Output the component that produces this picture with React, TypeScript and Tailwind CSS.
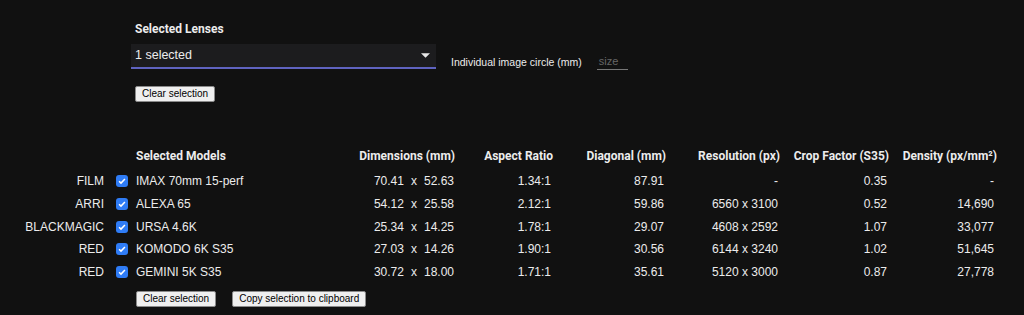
const rows = [
  { brand: "FILM", model: "IMAX 70mm 15-perf", w: "70.41", h: "52.63", ar: "1.34:1", diag: "87.91", res: "-", crop: "0.35", dens: "-" },
  { brand: "ARRI", model: "ALEXA 65", w: "54.12", h: "25.58", ar: "2.12:1", diag: "59.86", res: "6560 x 3100", crop: "0.52", dens: "14,690" },
  { brand: "BLACKMAGIC", model: "URSA 4.6K", w: "25.34", h: "14.25", ar: "1.78:1", diag: "29.07", res: "4608 x 2592", crop: "1.07", dens: "33,077" },
  { brand: "RED", model: "KOMODO 6K S35", w: "27.03", h: "14.26", ar: "1.90:1", diag: "30.56", res: "6144 x 3240", crop: "1.02", dens: "51,645" },
  { brand: "RED", model: "GEMINI 5K S35", w: "30.72", h: "18.00", ar: "1.71:1", diag: "35.61", res: "5120 x 3000", crop: "0.87", dens: "27,778" },
];

const cols = "grid grid-cols-[104px_32px_164px_155px_98px_113px_114px_109px_108px]";

function NativeButton({ children }: { children: React.ReactNode }) {
  return (
    <button className="h-4 px-[6px] bg-[#efefef] border border-[#8a8a8a] rounded-[2px] text-[10px] leading-none text-black font-['Liberation_Sans',Arial,sans-serif]">
      {children}
    </button>
  );
}

function Check() {
  return (
    <span className="w-3 h-3 rounded-[3px] bg-[#2f7cf6] flex items-center justify-center">
      <svg viewBox="0 0 12 12" className="w-[10px] h-[10px]">
        <path d="M2.5 6.2l2.3 2.3 4.7-5" fill="none" stroke="white" strokeWidth="1.8" />
      </svg>
    </span>
  );
}

export default function App() {
  return (
    <div className="w-[1024px] h-[315px] bg-[#111111] text-[#ececec] font-['Liberation_Sans',Arial,sans-serif] overflow-hidden">
      {/* Lens selection */}
      <div className="pl-[135px] pt-[21px]">
        <div className="text-[12px] font-bold leading-4 font-['Roboto',sans-serif]">Selected Lenses</div>
        <div className="flex items-end mt-[7px] -ml-1">
          <div className="w-[305px] h-[25px] bg-[#1c1c1e] border-b-2 border-[#5f63c0] flex items-center justify-between pl-1 pr-[6px]">
            <span className="text-[12.5px]">1 selected</span>
            <svg viewBox="0 0 10 5" className="w-[9px] h-[5px]">
              <path d="M0 0h10L5 5z" fill="#e8e8e8" />
            </svg>
          </div>
          <span className="ml-[15px] text-[10.5px] leading-4 mb-[-1px]">Individual image circle (mm)</span>
          <div className="ml-[15px] w-[31px] border-b border-[#777] text-[11px] text-[#666] leading-4 pl-[2px] mb-[-1px]">size</div>
        </div>
        <div className="mt-[17px] flex">
          <NativeButton>Clear selection</NativeButton>
        </div>
      </div>

      {/* Models table */}
      <div className="mt-[42px]">
        <div className={`${cols} h-[24px] items-center text-[12px] font-bold font-['Roboto',sans-serif]`}>
          <span />
          <span />
          <span>Selected Models</span>
          <span className="text-right">Dimensions (mm)</span>
          <span className="text-right">Aspect Ratio</span>
          <span className="text-right">Diagonal (mm)</span>
          <span className="text-right">Resolution (px)</span>
          <span className="text-right">Crop Factor (S35)</span>
          <span className="text-right">Density (px/mm²)</span>
        </div>
        {rows.map((r, i) => (
          <div key={i} className={`${cols} h-[22.7px] items-center text-[12px] ${i === 0 ? "mt-[2px]" : ""}`}>
            <span className="text-right">{r.brand}</span>
            <span className="flex justify-center pl-1">
              <Check />
            </span>
            <span>{r.model}</span>
            <span className="flex justify-end pr-[1px]">
              <span>{r.w}</span>
              <span className="mx-[7px]">x</span>
              <span>{r.h}</span>
            </span>
            <span className="text-right pr-[2px]">{r.ar}</span>
            <span className="text-right pr-[2px]">{r.diag}</span>
            <span className="text-right pr-[2px]">{r.res}</span>
            <span className="text-right pr-[2px]">{r.crop}</span>
            <span className="text-right pr-[3px]">{r.dens}</span>
          </div>
        ))}
        <div className="pl-[136px] mt-[8px] flex gap-4">
          <NativeButton>Clear selection</NativeButton>
          <NativeButton>Copy selection to clipboard</NativeButton>
        </div>
      </div>
    </div>
  );
}
